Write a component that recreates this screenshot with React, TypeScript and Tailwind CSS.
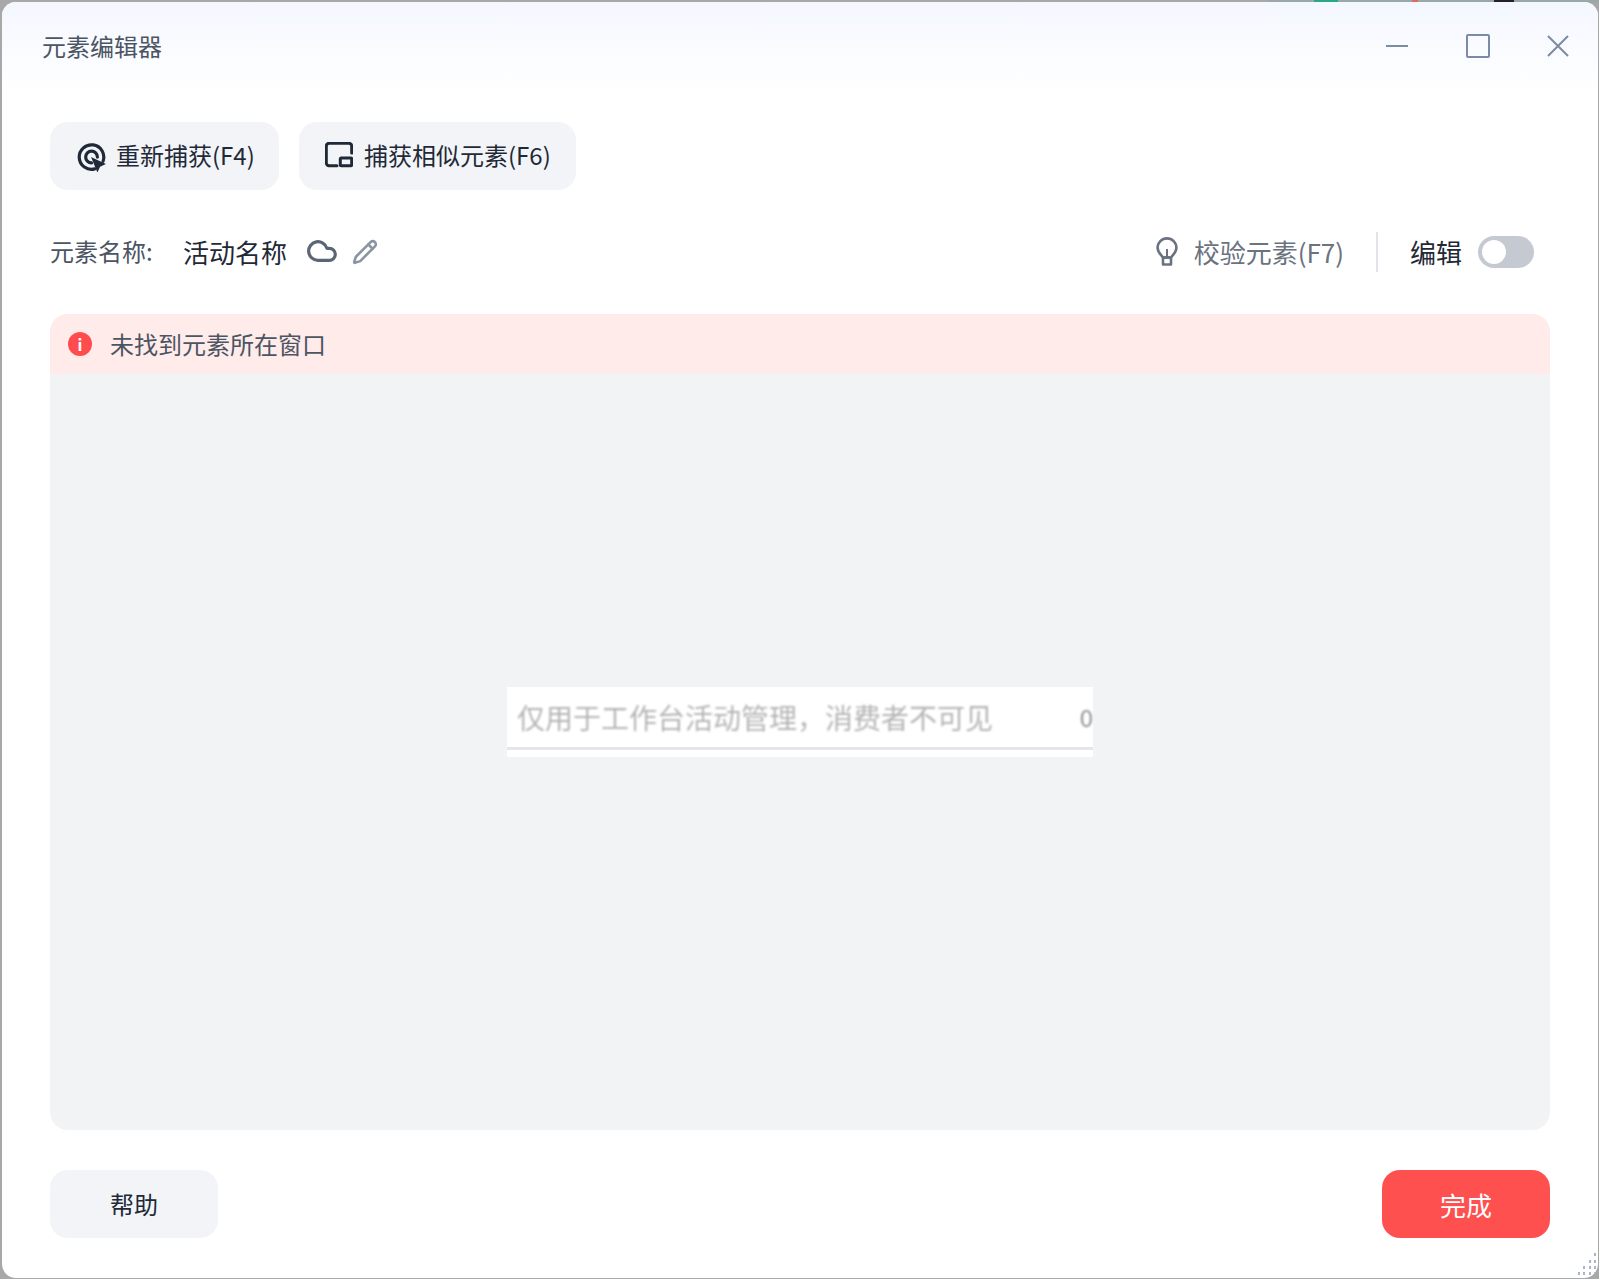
import React from 'react';
import { Cloud, Pencil } from 'lucide-react';

const RecaptureIcon = () => (
  <svg width="32" height="32" viewBox="0 0 30 30" fill="none" stroke="#1f2937" strokeWidth="3" strokeLinecap="round">
    <path d="M26.3 19.9A11.5 11.5 0 1 0 18.5 27.1" />
    <path d="M21 16A5.5 5.5 0 1 0 15.5 21.5" />
    <path d="M15 16 L29 22.5 L23.5 25 L21 30.5 Z" fill="#1f2937" stroke="none" />
  </svg>
);

const SimilarIcon = () => (
  <svg width="28" height="28" viewBox="0 0 28 28" fill="none" stroke="#1f2937" strokeWidth="3">
    <path d="M12 23.7H4a2.7 2.7 0 0 1-2.7-2.7V4A2.7 2.7 0 0 1 4 1.3h20A2.7 2.7 0 0 1 26.7 4v7" strokeLinecap="round" />
    <rect x="15.3" y="16" width="11.4" height="7.7" rx="1" />
  </svg>
);

const BulbIcon = () => (
  <svg width="22" height="30" viewBox="0 0 22 30" fill="none" stroke="#6b7280" strokeWidth="2.6" strokeLinejoin="round">
    <path d="M7 20.5C5 17.5 1.6 15.5 1.6 10.8A9.4 9.4 0 0 1 20.4 10.8C20.4 15.5 17 17.5 15 20.5Z" />
    <path d="M11 12V20" strokeWidth="2" />
    <path d="M7 20.5H15V27.5H7Z" />
  </svg>
);

const ResizeGrip = () => (
  <svg width="20" height="24" viewBox="0 0 20 24" className="absolute right-[1px] bottom-[1px]">
    <g fill="#a9b5cc">
      <rect x="17" y="0" width="2" height="3" />
      <rect x="12" y="7" width="2" height="3" />
      <rect x="17" y="7" width="2" height="3" />
      <rect x="6" y="13" width="2" height="3" />
      <rect x="12" y="13" width="2" height="3" />
      <rect x="17" y="13" width="2" height="3" />
      <rect x="1" y="19" width="2" height="3" />
      <rect x="6" y="19" width="2" height="3" />
      <rect x="12" y="19" width="2" height="3" />
      <rect x="17" y="19" width="2" height="3" />
    </g>
  </svg>
);

export default function App() {
  return (
    <div className="relative h-[1279px] w-[1599px] overflow-hidden bg-[#a8a8a8] pt-[2px] pl-[2px] pr-[1px] pb-[1px] font-['Noto_Sans_CJK_SC','Noto_Sans',sans-serif]">
      {/* desktop peeking out behind the window */}
      <div className="absolute top-0 left-[1268px] h-[3px] w-[331px] bg-[#9aa8a8]"></div>
      <div className="absolute top-0 left-[1314px] h-[3px] w-[24px] bg-[#2aa884]"></div>
      <div className="absolute top-0 left-[1412px] h-[3px] w-[6px] bg-[#d9705f]"></div>
      <div className="absolute top-0 left-[1494px] h-[3px] w-[20px] bg-[#222222]"></div>

      <div className="relative flex h-full flex-col overflow-hidden rounded-[14px] bg-white">
        {/* title bar */}
        <div className="flex h-[90px] shrink-0 items-start justify-between bg-gradient-to-b from-[#f4f7ff] to-white pl-[40px]">
          <span className="mt-[26px] text-[24px] leading-[36px] text-[#4b5563]">元素编辑器</span>
          <div className="mt-[32px] mr-[29px] flex items-center">
            <div className="mr-[58px] h-[2px] w-[22px] bg-[#7b8ba5]"></div>
            <div className="mr-[57px] h-[24px] w-[24px] rounded-[2px] border-2 border-[#7b8ba5]"></div>
            <svg width="22" height="22" viewBox="0 0 22 22" stroke="#7b8ba5" strokeWidth="2" fill="none">
              <path d="M1 1 L21 21 M21 1 L1 21" />
            </svg>
          </div>
        </div>

        <div className="flex min-h-0 flex-1 flex-col px-[48px] pb-[40px]">
          {/* capture buttons */}
          <div className="mt-[30px] flex gap-[20px]">
            <button className="flex h-[68px] w-[229px] items-center gap-[9px] rounded-[18px] bg-[#f2f4f8] pl-[25px] text-[24px] text-[#1f2937]">
              <RecaptureIcon />
              <span className="-mt-[2px]">重新捕获(F4)</span>
            </button>
            <button className="flex h-[68px] w-[277px] items-center gap-[11px] rounded-[18px] bg-[#f2f4f8] pl-[26px] text-[24px] text-[#1f2937]">
              <SimilarIcon />
              <span className="-mt-[2px]">捕获相似元素(F6)</span>
            </button>
          </div>

          {/* element name row */}
          <div className="mt-[42px] flex h-[40px] items-center justify-between">
            <div className="flex items-center">
              <span className="-mt-[2px] w-[133px] text-[24px] text-[#4b5563]">元素名称:</span>
              <span className="-mt-[2px] text-[26px] text-[#1f2937]">活动名称</span>
              <Cloud className="ml-[19px] -mt-[3px] h-[32px] w-[32px] text-[#5b6675]" strokeWidth={2.4} />
              <Pencil className="ml-[14px] h-[26px] w-[26px] text-[#8a94a3]" strokeWidth={2.4} />
            </div>
            <div className="flex items-center pr-[16px]">
              <BulbIcon />
              <span className="-mt-[2px] ml-[16px] text-[26px] text-[#6b7280]">校验元素(F7)</span>
              <div className="mx-[32px] h-[40px] w-[2px] bg-[#e2e4e9]"></div>
              <span className="-mt-[2px] text-[26px] text-[#1f2937]">编辑</span>
              <div className="ml-[16px] flex h-[32px] w-[56px] items-center rounded-full bg-[#c5cad2] pl-[4px]">
                <div className="h-[24px] w-[24px] rounded-full bg-white"></div>
              </div>
            </div>
          </div>

          {/* preview */}
          <div className="mt-[42px] flex min-h-0 flex-1 flex-col overflow-hidden rounded-[18px] bg-[#f1f3f5]">
            <div className="flex h-[60px] shrink-0 items-center bg-[#ffebe9] pl-[18px] text-[24px] text-[#4b5563]">
              <span className="flex h-[24px] w-[24px] items-center justify-center rounded-full bg-[#ff4d4f] text-[16px] font-bold text-white">i</span>
              <span className="-mt-[1px] ml-[18px]">未找到元素所在窗口</span>
            </div>
            <div className="flex flex-1 items-center justify-center pb-[60px]">
              <div className="h-[70px] w-[586px] overflow-hidden bg-white">
                <div className="flex h-[60px] items-center justify-between pl-[10px] text-[28px] text-[#b4b4b4] blur-[1.2px]">
                  <span>仅用于工作台活动管理，消费者不可见</span>
                  <span className="text-[24px] text-[#8f8f96]">0</span>
                </div>
                <div className="h-[3px] w-full bg-[#e5e6ec]"></div>
              </div>
            </div>
          </div>

          {/* footer */}
          <div className="mt-[40px] flex justify-between">
            <button className="h-[68px] w-[168px] rounded-[18px] bg-[#f2f4f8] text-[24px] text-[#1f2937]">帮助</button>
            <button className="h-[68px] w-[168px] rounded-[18px] bg-[#ff5050] text-[26px] text-white">完成</button>
          </div>
        </div>

        <ResizeGrip />
      </div>
    </div>
  );
}
